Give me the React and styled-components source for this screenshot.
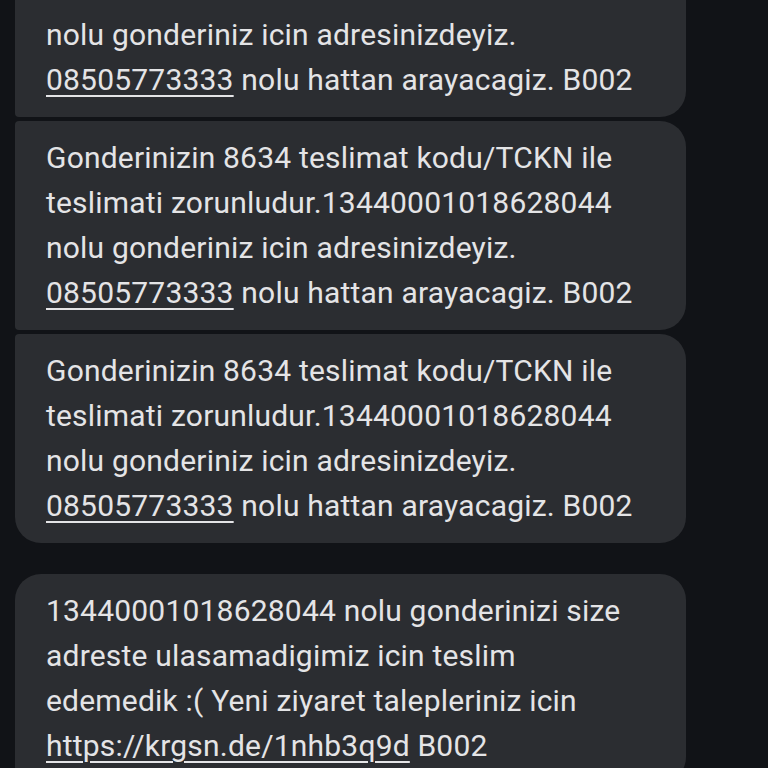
import React from "react";
import styled, { createGlobalStyle } from "styled-components";

const Global = createGlobalStyle`
  html, body {
    margin: 0;
    padding: 0;
    background: #111317;
    overflow: hidden;
  }
  body {
    font-family: Roboto, "Noto Sans", sans-serif;
  }
`;

const Thread = styled.div`
  display: flex;
  flex-direction: column;
  padding-left: 15px;
  width: 768px;
  height: 768px;
  box-sizing: border-box;
  overflow: hidden;
`;

const Group = styled.div`
  display: flex;
  flex-direction: column;
  gap: 4px;
  margin-top: ${(p) => p.$offset || 0}px;
`;

const Bubble = styled.div`
  width: 671px;
  box-sizing: border-box;
  background: #2b2d31;
  padding: 14px 16px 15px 31px;
  border-radius: ${(p) => (p.$first ? 26 : 4)}px 26px 26px
    ${(p) => (p.$last ? 26 : 4)}px;
  color: #e4e4e6;
  font-size: 30px;
  line-height: 45px;
  letter-spacing: 0.2px;
`;

const Line = styled.div`
  white-space: nowrap;
`;

const Link = styled.span`
  text-decoration: underline;
  text-decoration-thickness: 2px;
  text-underline-offset: 5px;
`;

const delivery = [
  "Gonderinizin 8634 teslimat kodu/TCKN ile",
  "teslimati zorunludur.13440001018628044",
  "nolu gonderiniz icin adresinizdeyiz.",
  <>
    <Link>08505773333</Link> nolu hattan arayacagiz. B002
  </>,
];

const missed = [
  "13440001018628044 nolu gonderinizi size",
  "adreste ulasamadigimiz icin teslim",
  "edemedik :( Yeni ziyaret talepleriniz icin",
  <>
    <Link>https://krgsn.de/1nhb3q9d</Link> B002
  </>,
];

function Message({ lines, first, last }) {
  return (
    <Bubble $first={first} $last={last}>
      {lines.map((l, i) => (
        <Line key={i}>{l}</Line>
      ))}
    </Bubble>
  );
}

export default function App() {
  return (
    <>
      <Global />
      <Thread>
        <Group $offset={-92}>
          <Message lines={delivery} />
          <Message lines={delivery} />
          <Message lines={delivery} last />
        </Group>
        <Group $offset={31}>
          <Message lines={missed} first />
        </Group>
      </Thread>
    </>
  );
}
